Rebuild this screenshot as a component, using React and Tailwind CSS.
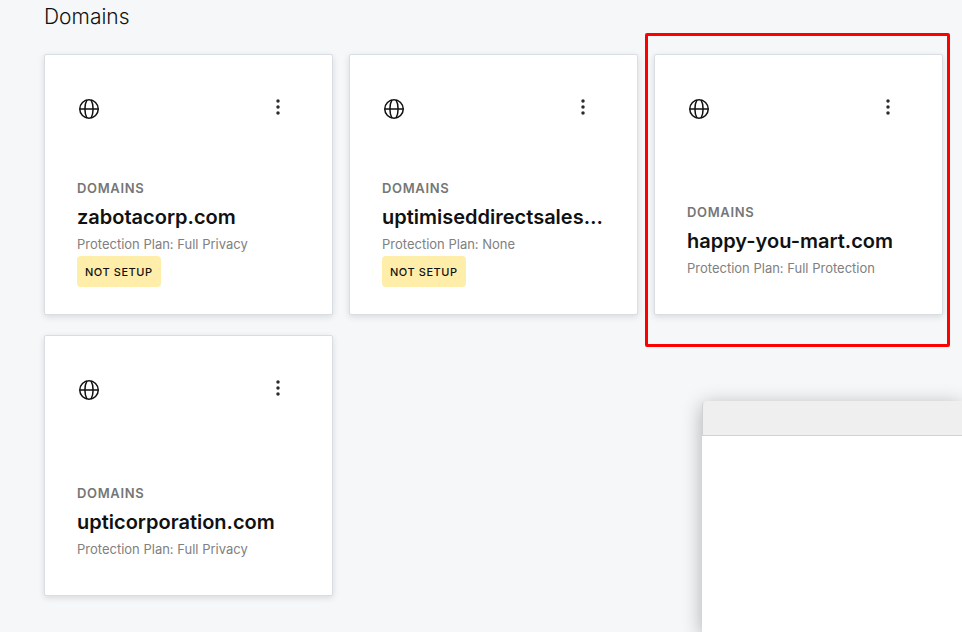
const domains = [
  { name: "zabotacorp.com", plan: "Full Privacy", notSetup: true },
  { name: "uptimiseddirectsales…", plan: "None", notSetup: true },
  { name: "happy-you-mart.com", plan: "Full Protection", highlighted: true },
  { name: "upticorporation.com", plan: "Full Privacy" },
];

function GlobeIcon() {
  return (
    <svg className="size-6" viewBox="0 0 24 24" fill="none" stroke="#111" strokeWidth="1.5" aria-hidden="true">
      <circle cx="12" cy="12" r="9.25" />
      <path d="M2.75 12h18.5M10 2.9C7.2 7.6 7.2 16.4 10 21.1M14 2.9c2.8 4.7 2.8 13.5 0 18.2" />
    </svg>
  );
}

function DotsIcon() {
  return (
    <svg className="size-5" viewBox="0 0 20 20" fill="#2b2b2b" aria-hidden="true">
      <circle cx="10" cy="4" r="1.75" />
      <circle cx="10" cy="10" r="1.75" />
      <circle cx="10" cy="16" r="1.75" />
    </svg>
  );
}

function DomainCard({ name, plan, notSetup, highlighted }) {
  return (
    <article className="relative flex min-h-[261px] min-w-0 flex-col justify-between rounded-xs border border-[#d8dee3] bg-white px-8 pt-10 pb-[34px] shadow-[0_2px_6px_rgba(0,0,0,0.12)]">
      <div className="flex items-start justify-between pr-3">
        <div className="pt-[2px]">
          <GlobeIcon />
        </div>
        <button type="button" aria-label={`More options for ${name}`} className="pt-[2px]">
          <DotsIcon />
        </button>
      </div>
      <div>
        <p className="text-[13px] leading-5 font-semibold tracking-wider text-[#767676]">DOMAINS</p>
        <h2 className="mt-1 truncate text-xl leading-[30px] font-semibold text-[#111]">{name}</h2>
        <p className="text-[13px] leading-6 text-[#808080]">Protection Plan: {plan}</p>
        {notSetup && (
          <span className="-mb-[7px] flex h-[31px] w-fit items-center rounded bg-[#ffeea9] px-2 pt-px text-[11px] font-medium tracking-wider text-[#111]">
            NOT SETUP
          </span>
        )}
      </div>
      {highlighted && (
        <div className="pointer-events-none absolute -top-[22px] -right-2 -bottom-[33px] -left-[10px] rounded-xs border-3 border-[#ff0000]" />
      )}
    </article>
  );
}

export default function App() {
  return (
    <div className="relative min-h-screen overflow-hidden bg-[#f5f7f8] pr-[19px] pb-9 pl-11 font-['Inter','Liberation_Sans',sans-serif]">
      <h1 className="pt-1 text-[21px] leading-[26px] font-light text-[#111]">Domains</h1>
      <main className="mt-6 grid grid-cols-3 gap-x-4 gap-y-5">
        {domains.map((domain) => (
          <DomainCard key={domain.name} {...domain} />
        ))}
      </main>
      <div className="absolute right-0 bottom-0 h-[231px] w-[260px] rounded-tl bg-white shadow-[0_4px_20px_rgba(0,0,0,0.3)]">
        <div className="h-[35px] rounded-tl border-b border-l border-[#d2d2d2] bg-[#efefef]" />
      </div>
    </div>
  );
}
